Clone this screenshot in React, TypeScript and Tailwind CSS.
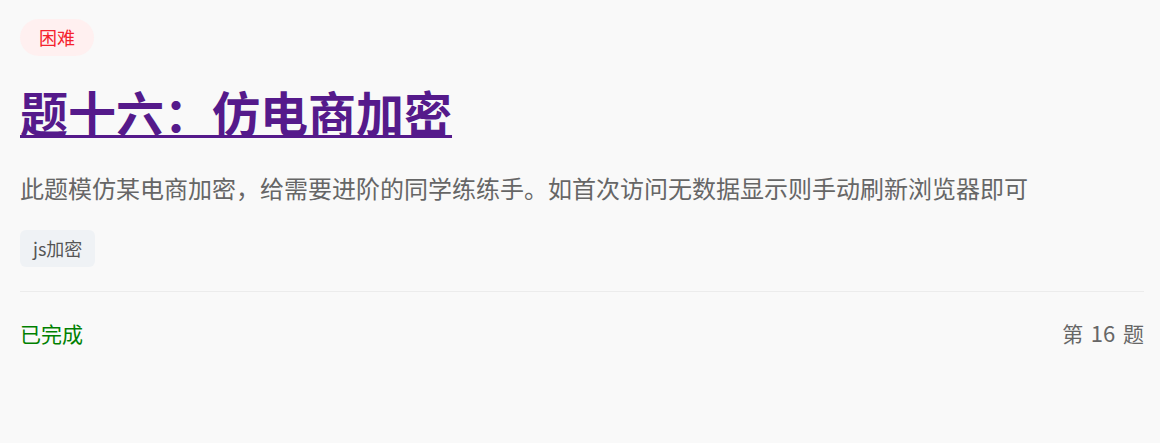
export default function App() {
  return (
    <div
      className="min-h-[443px] w-full bg-[#f9f9f9] pl-5 pr-4 pt-[19px]"
      style={{ fontFamily: '"Noto Sans CJK SC", "Noto Sans", sans-serif' }}
    >
      <div className="flex">
        <span className="rounded-full bg-[#fff0f0] px-[19px] py-[6px] text-[18px] leading-[25px] text-[#f5222d]">
          困难
        </span>
      </div>

      <h1 className="mt-[24px] text-[48px] font-bold leading-[62px]">
        <a href="#" className="text-[#551a8b] underline decoration-[3px] underline-offset-[3px]">
          题十六：仿电商加密
        </a>
      </h1>

      <p className="mt-[28px] text-[24px] leading-[36px] text-[#666666]">
        此题模仿某电商加密，给需要进阶的同学练练手。如首次访问无数据显示则手动刷新浏览器即可
      </p>

      <div className="mt-[24px] flex">
        <span className="rounded-md bg-[#eff2f5] px-[13px] py-[6px] text-[18px] leading-[25px] text-[#555555]">
          js加密
        </span>
      </div>

      <div className="mt-[24px] border-t border-[#ececec]" />

      <div className="flex items-center justify-between pt-[25px] text-[21px] leading-[30px]">
        <span className="text-[#008000]">已完成</span>
        <span className="text-[#666666] [word-spacing:3px]">
          第 <span className="text-[22px]">16</span> 题
        </span>
      </div>
    </div>
  );
}
